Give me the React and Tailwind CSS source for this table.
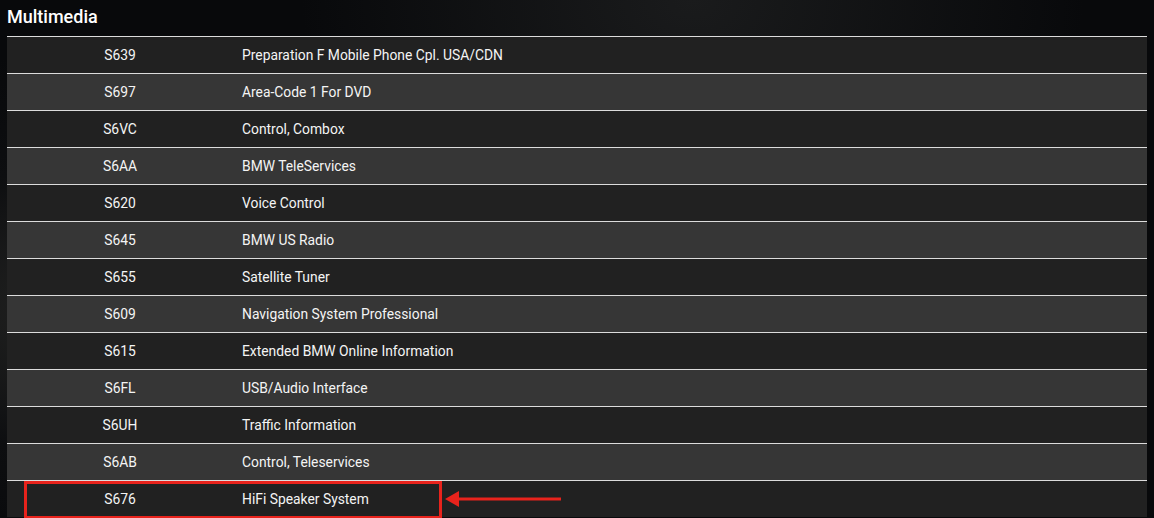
const rows = [
  ["S639", "Preparation F Mobile Phone Cpl. USA/CDN"],
  ["S697", "Area-Code 1 For DVD"],
  ["S6VC", "Control, Combox"],
  ["S6AA", "BMW TeleServices"],
  ["S620", "Voice Control"],
  ["S645", "BMW US Radio"],
  ["S655", "Satellite Tuner"],
  ["S609", "Navigation System Professional"],
  ["S615", "Extended BMW Online Information"],
  ["S6FL", "USB/Audio Interface"],
  ["S6UH", "Traffic Information"],
  ["S6AB", "Control, Teleservices"],
  ["S676", "HiFi Speaker System"],
];

export default function App() {
  return (
    <div
      className="relative w-[1154px] h-[518px] overflow-hidden bg-[#08090b] text-white"
      style={{ fontFamily: "Roboto, 'Liberation Sans', sans-serif" }}
    >
      {/* background photo stand-in */}
      <div className="absolute inset-0 bg-[radial-gradient(ellipse_at_20%_60%,#2a2a28_0%,#0d0e10_35%,transparent_60%)]" />
      <div className="absolute inset-0 bg-[radial-gradient(ellipse_at_60%_0%,#1a1b1c_0%,transparent_40%)]" />

      <div className="relative">
        <h2 className="h-9 pl-[7px] pt-[5px] text-[18px] font-medium leading-6">Multimedia</h2>

        <div className="mx-[7px]">
          {rows.map(([code, name], i) => (
            <div
              key={code}
              className={`relative grid grid-cols-[226px_1fr] h-[37px] items-center border-t border-[#dcdcdc] text-[13.85px] text-[#f4f4f4] ${
                i % 2 === 0 ? "bg-[#212121]" : "bg-[#363636]"
              }`}
            >
              <div className="text-center">{code}</div>
              <div className="pl-[9px]">{name}</div>
              {code === "S676" && (
                <>
                  <div className="absolute left-[17px] top-[0px] w-[418px] h-[38px] border-[3px] border-[#e8231c]" />
                  <svg className="absolute left-[438px] top-[9px]" width="118" height="18" viewBox="0 0 118 18">
                    <polygon points="0,9 14,1 14,17" fill="#e8231c" />
                    <rect x="12" y="7.5" width="104" height="3" fill="#e8231c" />
                  </svg>
                </>
              )}
            </div>
          ))}
        </div>
      </div>
    </div>
  );
}
